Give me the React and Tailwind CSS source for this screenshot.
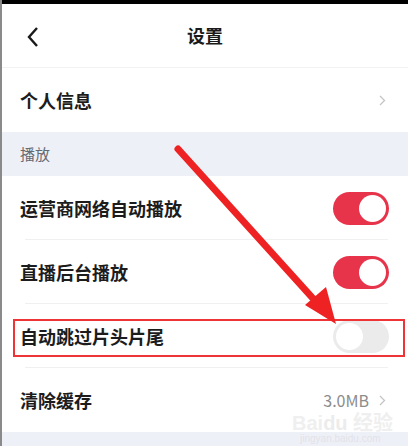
import React from 'react';

const Toggle = ({ on }) => (
    <div
        className={
            'w-[56px] h-[33px] rounded-full p-[3px] flex ' +
            (on ? 'bg-[#e8344b] justify-end' : 'bg-[#ebebeb] justify-start')
        }
    >
        <div className="w-[27px] h-[27px] rounded-full bg-white" />
    </div>
);

const Chevron = () => (
    <svg width="7" height="11" viewBox="0 0 7 11" className="shrink-0">
        <path d="M1 1 L5.5 5.5 L1 10" fill="none" stroke="#c4c4c4" strokeWidth="1.3" />
    </svg>
);

const Row = ({ label, children, divider = true }) => (
    <div className="h-[64px] pl-[18px] pr-[19px] flex items-center justify-between relative">
        <span className="text-[18px] font-semibold text-[#1c1c1c]">{label}</span>
        {children}
        {divider && <div className="absolute bottom-0 left-[23px] right-[20px] h-px bg-[#f0f0f0]" />}
    </div>
);

const App = () => {
    return (
        <div
            className="w-[408px] h-[446px] relative overflow-hidden bg-white border-l-2 border-[#8a8a8a]"
            style={{ fontFamily: '"Noto Sans CJK SC", "Noto Sans", sans-serif' }}
        >
            <div className="h-[4px] bg-black" />

            {/* header */}
            <div className="h-[64px] flex items-center justify-center relative border-b border-[#f2f2f2]">
                <svg width="14" height="22" viewBox="0 0 14 22" className="absolute left-[24px] top-[22px]">
                    <path d="M11 2 L3 11 L11 20" fill="none" stroke="#1a1a1a" strokeWidth="2.4" />
                </svg>
                <span className="text-[18px] font-bold text-[#1a1a1a]">设置</span>
            </div>

            <div className="h-[64px] pl-[18px] pr-[22px] flex items-center justify-between">
                <span className="text-[18px] font-semibold text-[#1c1c1c]">个人信息</span>
                <Chevron />
            </div>

            {/* section */}
            <div className="h-[44px] bg-[#eef0f8] flex items-center px-[18px]">
                <span className="text-[15px] text-[#666a72]">播放</span>
            </div>

            <div className="bg-white">
                <Row label="运营商网络自动播放">
                    <Toggle on />
                </Row>
                <Row label="直播后台播放">
                    <Toggle on />
                </Row>
                <Row label="自动跳过片头片尾">
                    <Toggle on={false} />
                </Row>
                <Row label="清除缓存" divider={false}>
                    <div className="flex items-center gap-[10px] mr-[3px]">
                        <span className="text-[16px] text-[#8c8c8c]">3.0MB</span>
                        <Chevron />
                    </div>
                </Row>
            </div>
            <div className="h-[20px] bg-[#eef0f8]" />

            {/* watermark */}
            <div className="absolute left-[290px] top-[414px] flex flex-col items-start opacity-40 pointer-events-none">
                <span className="text-[20px] leading-[19px] font-bold text-[#d8d8d8]" style={{ fontFamily: '"Liberation Sans", "Noto Sans CJK SC", sans-serif' }}>
                    Bai<span className="text-[#d0d0d0]">du</span> 经验
                </span>
                <span className="text-[10px] leading-[12px] text-[#cfcfcf] ml-[8px]" style={{ fontFamily: '"Liberation Sans", sans-serif' }}>
                    jingyan.baidu.com
                </span>
            </div>

            {/* annotation */}
            <div className="absolute left-[11px] top-[319px] w-[392px] h-[38px] border-2 border-[#ee3436] pointer-events-none" />
            <svg width="408" height="446" className="absolute left-0 top-0 pointer-events-none">
                <line x1="176" y1="149" x2="316" y2="304" stroke="#ee2222" strokeWidth="7" strokeLinecap="round" />
                <polygon points="334,324 303,305 324,287" fill="#ee2222" />
            </svg>
        </div>
    );
};

export default App;
